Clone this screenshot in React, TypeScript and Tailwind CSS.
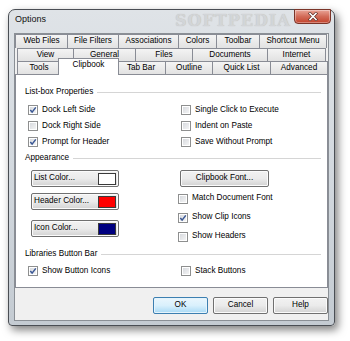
import React from "react";

type Tab = { label: string; w: string; on?: boolean };

const ROW1: Tab[] = [
  { label: "Web Files", w: "w-[53px]" },
  { label: "File Filters", w: "w-[52px]" },
  { label: "Associations", w: "w-[61px]" },
  { label: "Colors", w: "w-[39px]" },
  { label: "Toolbar", w: "w-[44px]" },
  { label: "Shortcut Menu", w: "w-[68px]" },
];

const ROW2: Tab[] = [
  { label: "View", w: "w-[57px]" },
  { label: "General", w: "w-[63px]" },
  { label: "Files", w: "w-[58px]" },
  { label: "Documents", w: "w-[76px]" },
  { label: "Internet", w: "w-[59px]" },
];

const ROW3: Tab[] = [
  { label: "Tools", w: "w-[44px]" },
  { label: "Clipbook", w: "w-[61px]", on: true },
  { label: "Tab Bar", w: "w-[50px]" },
  { label: "Outline", w: "w-[48px]" },
  { label: "Quick List", w: "w-[59px]" },
  { label: "Advanced", w: "w-[58px]" },
];

const TabRow = ({ tabs, className }: { tabs: Tab[]; className: string }) => (
  <div className={`flex items-start ${className}`}>
    {tabs.map((t, i) =>
      t.on ? (
        <div
          key={t.label}
          className={`${t.w} relative z-10 -mt-[3px] -ml-[3px] -mr-[2px] flex h-[17px] shrink-0 items-start justify-center border border-b-0 border-[#898c95] bg-white pt-[2px]`}
        >
          {t.label}
        </div>
      ) : (
        <div
          key={t.label}
          className={`${t.w} ${i === 0 ? "" : "-ml-px"} flex h-full shrink-0 items-center justify-center border border-b-0 border-[#898c95] bg-gradient-to-b from-[#f4f4f4] to-[#e2e2e2]`}
        >
          {t.label}
        </div>
      )
    )}
  </div>
);

const Box = ({ on }: { on?: boolean }) => (
  <span className="flex h-[10px] w-[10px] shrink-0 items-center justify-center border border-[#8e8f8f] bg-gradient-to-br from-[#d3d6db] to-[#f8f8f8] shadow-[inset_0_0_0_1px_#fff]">
    {on && (
      <svg width="8" height="8" viewBox="0 0 8 8">
        <path d="M1.3 4.1 L3.1 6.1 L6.8 1.4" fill="none" stroke="#3a5794" strokeWidth="1.5" />
      </svg>
    )}
  </span>
);

const CheckRow = ({ label, on, h = "h-4" }: { label: string; on?: boolean; h?: string }) => (
  <div className={`flex ${h} items-center gap-[4px]`}>
    <Box on={on} />
    <span>{label}</span>
  </div>
);

const Group = ({ label }: { label: string }) => (
  <div className="flex h-4 items-center pr-[6px]">
    <span>{label}</span>
    <span className="ml-[4px] h-px flex-1 bg-[#d5d5d5]" />
  </div>
);

const BTN =
  "rounded-[2px] border border-[#707070] bg-gradient-to-b from-[#f2f2f2] via-[#ebebeb] to-[#d2d2d2] shadow-[inset_0_0_0_1px_#fbfbfb]";

const ColorBtn = ({ label, swatch, mt }: { label: string; swatch: string; mt: string }) => (
  <div className={`${BTN} ${mt} flex h-[17px] w-[88px] items-center justify-between pl-[2px] pr-[2px]`}>
    <span>{label}</span>
    <span className={`h-[12px] w-[18px] border border-[#3a3a3a] ${swatch}`} />
  </div>
);

export default function App() {
  return (
    <div className="h-[341px] w-[350px] overflow-hidden bg-white pl-[8px] pt-[9px] font-['Liberation_Sans',Arial,sans-serif] text-[8.2px] leading-none text-black">
      <div className="flex h-[317px] w-[327px] flex-col rounded-t-[7px] rounded-b-[4px] border border-[#4a4e54] bg-gradient-to-b from-[#dfe3e7] via-[#d3d9df] to-[#c4cbd2] shadow-[3px_4px_9px_rgba(0,0,0,0.5)]">
        {/* title bar */}
        <div className="relative flex h-[23px] shrink-0 items-start justify-between pl-[6px] pr-[3px]">
          <span className="mt-[5px] text-[9px] text-[#111]">Options</span>
          <span className="pointer-events-none absolute left-[166px] top-[3px] font-['DejaVu_Serif',serif] text-[16px] font-bold tracking-[1px] text-[#d2d5d8] [text-shadow:0_0_1px_#bcb7b0]">
            SOFTPEDIA
          </span>
          <div className="relative -mt-px flex h-[15px] w-[37px] items-center justify-center rounded-b-[4px] border border-[#7a3428] bg-gradient-to-b from-[#e9a497] via-[#d26b58] to-[#c2412a] shadow-[inset_0_0_0_1px_rgba(255,255,255,0.35)]">
            <svg width="10" height="9" viewBox="0 0 10 9">
              <path d="M2 1.5 L8 7.5 M8 1.5 L2 7.5" stroke="#5a2a22" strokeWidth="3" strokeLinecap="square" />
              <path d="M2 1.5 L8 7.5 M8 1.5 L2 7.5" stroke="#fff" strokeWidth="1.6" strokeLinecap="square" />
            </svg>
          </div>
        </div>

        {/* client area */}
        <div className="ml-[5px] flex h-[288px] w-[315px] flex-col border border-[#8a8f95] bg-[#f0f0f0]">
          <div className="flex flex-col">
            <TabRow tabs={ROW1} className="h-[14px]" />
            <TabRow tabs={ROW2} className="h-[13px] pl-[2px]" />
            <TabRow tabs={ROW3} className="h-[13px] pl-[2px]" />
            <div className="flex h-[214px] flex-col border border-[#898c95] bg-white pl-[9px] pt-[9px]">
              <Group label="List-box Properties" />
              <div className="mt-[2px] grid grid-cols-[153px_1fr] pl-[3px]">
                <div className="flex flex-col">
                  <CheckRow label="Dock Left Side" on />
                  <CheckRow label="Dock Right Side" />
                  <CheckRow label="Prompt for Header" on />
                </div>
                <div className="flex flex-col">
                  <CheckRow label="Single Click to Execute" />
                  <CheckRow label="Indent on Paste" />
                  <CheckRow label="Save Without Prompt" />
                </div>
              </div>

              <Group label="Appearance" />
              <div className="mt-[4px] grid h-[76px] grid-cols-[156px_1fr]">
                <div className="flex flex-col pl-[6px]">
                  <ColorBtn label="List Color..." swatch="bg-white" mt="" />
                  <ColorBtn label="Header Color..." swatch="bg-[#ff0000]" mt="mt-[6px]" />
                  <ColorBtn label="Icon Color..." swatch="bg-[#000080]" mt="mt-[10px]" />
                </div>
                <div className="-ml-[3px] flex flex-col">
                  <div className={`${BTN} ml-[2px] flex h-[17px] w-[89px] items-center justify-center`}>
                    Clipbook Font...
                  </div>
                  <div className="mt-[2px] flex flex-col">
                    <CheckRow label="Match Document Font" h="h-[19px]" />
                    <CheckRow label="Show Clip Icons" on h="h-[19px]" />
                    <CheckRow label="Show Headers" h="h-[19px]" />
                  </div>
                </div>
              </div>

              <Group label="Libraries Button Bar" />
              <div className="mt-[1px] grid grid-cols-[153px_1fr] pl-[3px]">
                <CheckRow label="Show Button Icons" on />
                <CheckRow label="Stack Buttons" />
              </div>
            </div>
          </div>

          <div className="mt-[9px] flex justify-end gap-[5px]">
            <div className="flex h-[17px] w-[55px] items-center justify-center rounded-[2px] border border-[#3c7fb1] bg-gradient-to-b from-[#eaf6fd] via-[#d9f0fc] to-[#a7d9f5] shadow-[inset_0_0_0_1px_#e5f4fc]">
              OK
            </div>
            <div className={`${BTN} flex h-[17px] w-[55px] items-center justify-center`}>Cancel</div>
            <div className={`${BTN} flex h-[17px] w-[55px] items-center justify-center`}>Help</div>
          </div>
        </div>
      </div>
    </div>
  );
}
